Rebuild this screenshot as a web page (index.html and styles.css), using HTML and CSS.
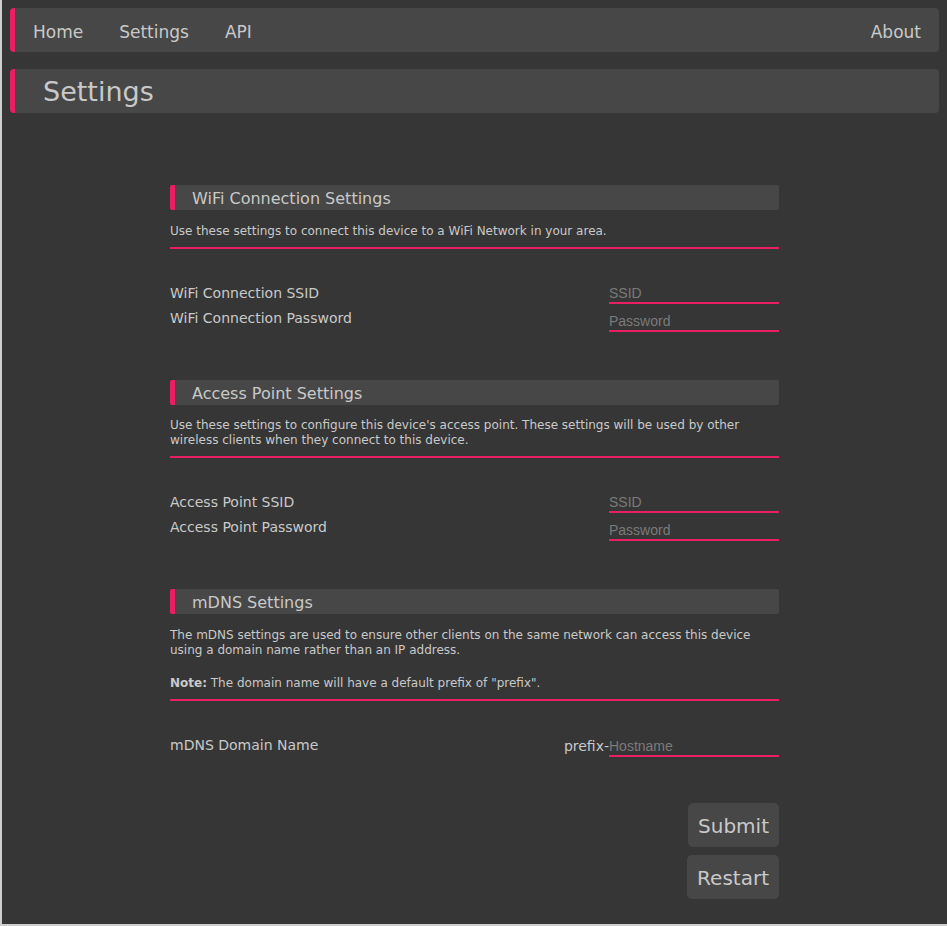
FILE: index.html
```html
<!DOCTYPE html>
<html lang="en">
<head>
<meta charset="utf-8">
<title>Settings</title>
<link rel="stylesheet" href="styles.css">
</head>
<body>
<div class="page">
  <nav class="nav">
    <div class="nav-left">
      <a class="nav-item" href="#">Home</a>
      <a class="nav-item" href="#">Settings</a>
      <a class="nav-item" href="#">API</a>
    </div>
    <a class="nav-item" href="#">About</a>
  </nav>
  <div class="title-bar">Settings</div>

  <main class="content">
    <section class="section">
      <h2 class="section-head">WiFi Connection Settings</h2>
      <div class="desc">
        <p>Use these settings to connect this device to a WiFi Network in your area.</p>
      </div>
      <div class="fields">
        <div class="labels">
          <div>WiFi Connection SSID</div>
          <div>WiFi Connection Password</div>
        </div>
        <div class="inputs">
          <input class="field" type="text" placeholder="SSID">
          <input class="field" type="password" placeholder="Password">
        </div>
      </div>
    </section>

    <section class="section">
      <h2 class="section-head">Access Point Settings</h2>
      <div class="desc desc-multi">
        <p>Use these settings to configure this device's access point. These settings will be used by other wireless clients when they connect to this device.</p>
      </div>
      <div class="fields">
        <div class="labels">
          <div>Access Point SSID</div>
          <div>Access Point Password</div>
        </div>
        <div class="inputs">
          <input class="field" type="text" placeholder="SSID">
          <input class="field" type="password" placeholder="Password">
        </div>
      </div>
    </section>

    <section class="section">
      <h2 class="section-head">mDNS Settings</h2>
      <div class="desc">
        <p>The mDNS settings are used to ensure other clients on the same network can access this device using a domain name rather than an IP address.</p>
        <p class="note"><b>Note:</b> The domain name will have a default prefix of "prefix".</p>
      </div>
      <div class="fields single">
        <div class="labels">
          <div>mDNS Domain Name</div>
        </div>
        <div class="host">
          <span class="prefix">prefix-</span><input class="field" type="text" placeholder="Hostname">
        </div>
      </div>
    </section>

    <div class="actions">
      <button class="btn" type="button">Submit</button>
      <button class="btn" type="button">Restart</button>
    </div>
  </main>
</div>
</body>
</html>
```
FILE: styles.css
```css
html, body {
  margin: 0;
  padding: 0;
  background: #363636;
}

body {
  font-family: "DejaVu Sans", Verdana, sans-serif;
  color: #c9c9c9;
}

.page {
  box-sizing: border-box;
  min-height: 926px;
  border-left: 2px solid #cfcfcf;
  border-bottom: 2px solid #cfcfcf;
  padding: 8px 8px 0 8px;
  background: #363636;
}

.nav {
  display: flex;
  justify-content: space-between;
  align-items: stretch;
  height: 44px;
  background: #474747;
  border-left: 5px solid #e91e63;
  border-radius: 4px;
}

.nav-left {
  display: flex;
}

.nav-item {
  display: block;
  padding: 4px 18px 0;
  font-size: 17px;
  line-height: 40px;
  color: #c9c9c9;
  text-decoration: none;
}

.title-bar {
  margin-top: 17px;
  box-sizing: border-box;
  height: 44px;
  padding: 2px 0 0 28px;
  line-height: 42px;
  background: #474747;
  border-left: 5px solid #e91e63;
  border-radius: 4px;
  font-size: 27px;
  color: #c9c9c9;
}

.content {
  width: 609px;
  margin: 72px auto 0;
}

.section + .section {
  margin-top: 48px;
}

.section-head {
  margin: 0;
  box-sizing: border-box;
  height: 25px;
  padding: 2px 0 0 17px;
  line-height: 23px;
  background: #474747;
  border-left: 5px solid #e91e63;
  border-radius: 2px;
  font-size: 16px;
  font-weight: normal;
  color: #c9c9c9;
}

.desc {
  margin-top: 14px;
  padding-bottom: 8px;
  border-bottom: 2px solid #e91e63;
  font-family: "DejaVu Sans", Tahoma, sans-serif;
  font-size: 12px;
  line-height: 15px;
  color: #c9c9c9;
}

.desc-multi {
  margin-top: 13px;
}

.desc p {
  margin: 0;
}

.desc .note {
  margin-top: 18px;
}

.fields {
  display: flex;
  justify-content: space-between;
  margin-top: 31px;
  font-size: 14px;
}

.labels {
  padding-top: 1px;
  line-height: 25px;
}

.inputs {
  display: flex;
  flex-direction: column;
  width: 170px;
  padding-top: 4px;
}

.field {
  box-sizing: content-box;
  display: block;
  width: 170px;
  height: 18px;
  margin: 0 0 8px 0;
  padding: 0;
  border: none;
  border-bottom: 2px solid #e91e63;
  border-radius: 0;
  background: transparent;
  outline: none;
  font-family: "Liberation Sans", Arial, sans-serif;
  font-size: 14px;
  color: #c9c9c9;
}

.inputs .field:last-child {
  margin-bottom: 0;
}

.field::placeholder {
  color: #7a7a7a;
}

.single {
  align-items: flex-start;
}

.host {
  display: flex;
  align-items: flex-start;
  padding-top: 5px;
}

.prefix {
  line-height: 18px;
  font-size: 14px;
  color: #c9c9c9;
}

.host .field {
  margin: 0;
}

.actions {
  display: flex;
  flex-direction: column;
  align-items: flex-end;
  gap: 8px;
  margin-top: 45px;
}

.btn {
  box-sizing: border-box;
  height: 44px;
  padding: 2px 10px 0;
  background: #474747;
  border: none;
  border-radius: 5px;
  font-family: "DejaVu Sans", Verdana, sans-serif;
  font-size: 20px;
  color: #c9c9c9;
  cursor: pointer;
}
```
